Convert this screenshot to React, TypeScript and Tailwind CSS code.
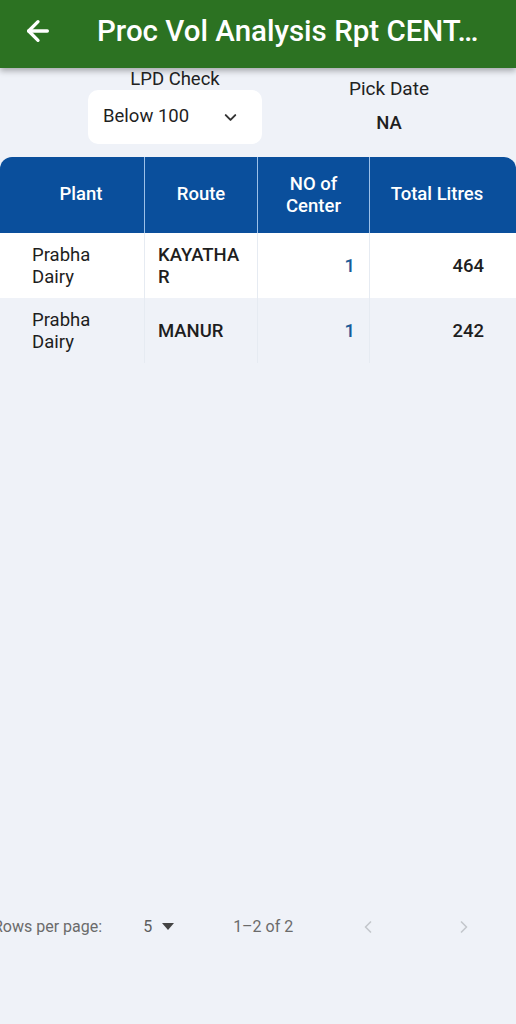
import React from "react";
import { ArrowLeft, ChevronDown, ChevronLeft, ChevronRight } from "lucide-react";

const rows = [
  { plant: "Prabha Dairy", route: "KAYATHA R", centers: 1, litres: 464 },
  { plant: "Prabha Dairy", route: "MANUR", centers: 1, litres: 242 },
];

export default function App() {
  return (
    <div
      className="w-[516px] h-[1024px] bg-[#eff2f8] flex flex-col overflow-hidden"
      style={{ fontFamily: "Roboto, 'Noto Sans', sans-serif" }}
    >
      {/* Header */}
      <div className="h-[68px] bg-[#2c7222] flex items-center pb-[6px] pl-[22px] shadow-[0_3px_6px_rgba(0,0,0,0.3)] relative z-10 shrink-0">
        <ArrowLeft className="w-[32px] h-[32px] text-white" strokeWidth={2.5} />
        <h1 className="ml-[43px] text-white text-[29.5px] font-medium whitespace-nowrap">
          Proc Vol Analysis Rpt CENT…
        </h1>
      </div>

      {/* Filters */}
      <div className="flex pt-[1px] h-[89px] shrink-0">
        <div className="w-[262px] pl-[88px] flex flex-col items-center">
          <span className="text-[18.5px] text-[#222] leading-[20px]">LPD Check</span>
          <div className="mt-[1px] w-[174px] h-[54px] bg-white rounded-[10px] flex items-center pl-[15px] pr-[22px] justify-between">
            <span className="text-[18.5px] text-[#1f1f1f]">Below 100</span>
            <ChevronDown className="w-[19px] h-[19px] text-[#333]" strokeWidth={2.5} />
          </div>
        </div>
        <div className="flex-1 flex flex-col items-center pt-[9px]">
          <span className="text-[19px] text-[#222] leading-[22px]">Pick Date</span>
          <span className="mt-[12px] text-[18.5px] font-medium text-[#1f1f1f] leading-[22px]">NA</span>
        </div>
      </div>

      {/* Table */}
      <div className="shrink-0">
        <div className="grid grid-cols-[145px_113px_112px_146px] bg-[#0a4f9c] rounded-t-[12px] h-[76px] text-white text-[18.5px] font-medium">
          <div className="flex items-center justify-center pl-[18px] border-r border-[#9cc0e8]">Plant</div>
          <div className="flex items-center justify-center border-r border-[#9cc0e8]">Route</div>
          <div className="flex items-center justify-center text-center leading-[22px] border-r border-[#9cc0e8]">
            NO of
            <br />
            Center
          </div>
          <div className="flex items-center justify-center pr-[12px]">Total Litres</div>
        </div>
        {rows.map((r, i) => (
          <div
            key={i}
            className={`grid grid-cols-[145px_113px_112px_146px] h-[65px] text-[18.5px] text-[#1e1e1e] leading-[22px] ${
              i === 0 ? "bg-white" : "bg-[#eff2f8]"
            }`}
          >
            <div className="flex items-center pl-[32px] pr-[20px] border-r border-[#e6ebf2]">{r.plant}</div>
            <div className="flex items-center pl-[13px] pr-[12px] font-medium break-all border-r border-[#e6ebf2]">
              {r.route}
            </div>
            <div className="flex items-center justify-end pr-[14px] text-[#1a5a99] font-medium border-r border-[#e6ebf2]">
              {r.centers}
            </div>
            <div className="flex items-center justify-end pr-[32px] font-medium">{r.litres}</div>
          </div>
        ))}
      </div>

      {/* Pagination */}
      <div className="mt-auto mb-[82px] flex items-center h-[30px] text-[16px] text-[#6b6b6b] ml-[-7px]">
        <span>Rows per page:</span>
        <span className="ml-[41px] text-[#5e5e5e]">5</span>
        <svg className="ml-[10px] w-[12px] h-[8px]" viewBox="0 0 12 8">
          <path d="M0 0h12L6 7z" fill="#444" />
        </svg>
        <span className="ml-[59px]">1–2 of 2</span>
        <ChevronLeft className="ml-[65px] w-[20px] h-[20px] text-[#c4c7cc]" strokeWidth={2} />
        <ChevronRight className="ml-[76px] w-[20px] h-[20px] text-[#c4c7cc]" strokeWidth={2} />
      </div>
    </div>
  );
}
